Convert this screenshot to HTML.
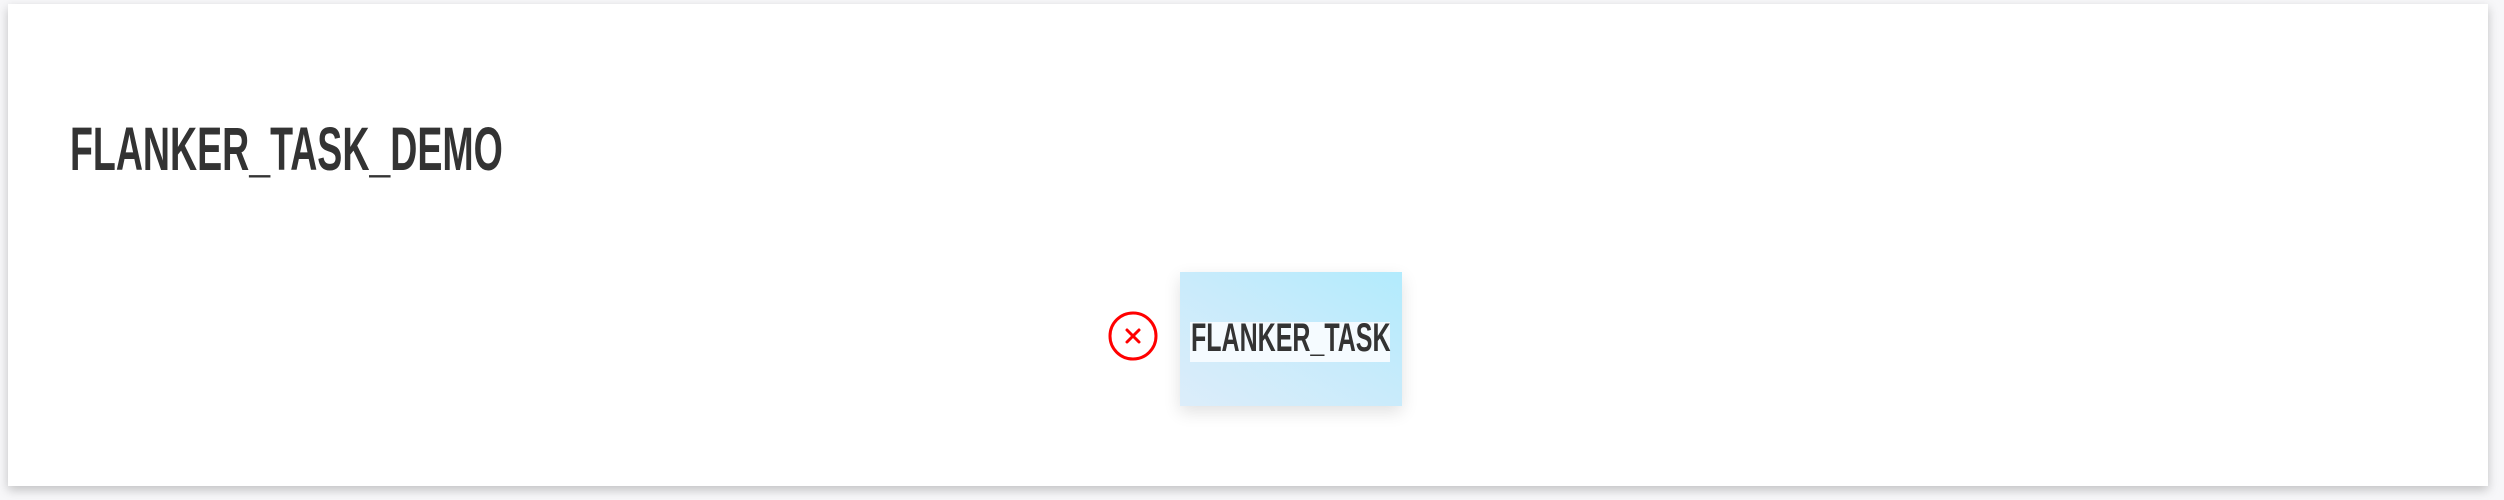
<!DOCTYPE html>
<html><head><style>
html,body{margin:0;padding:0;width:2504px;height:500px;background:#f7f7f9;overflow:hidden}
.card{position:absolute;left:8px;top:4px;width:2480px;height:482px;background:#fff;box-shadow:0 4px 10px rgba(0,0,0,.22)}
.t{position:absolute;font-family:"Liberation Sans",sans-serif;font-weight:bold;color:#333;white-space:nowrap;transform-origin:0 0}
.tile{position:absolute;left:1180px;top:272px;width:222px;height:134px;background:linear-gradient(30deg,#dcedfa 0%,#c9ebfb 50%,#b2ebfd 100%);box-shadow:0 6px 16px rgba(0,0,0,.12)}
.lab{position:absolute;left:1190px;top:322px;width:200px;height:40px;background:#f5fbff}
</style></head><body>
<div class="card"></div>
<div class="t" style="left:70px;top:116px;font-size:61px;line-height:66px;transform:scaleX(.615)">FLANKER_TASK_DEMO</div>
<svg style="position:absolute;left:1107px;top:310px" width="52" height="52" viewBox="0 0 52 52">
<circle cx="26" cy="26" r="23" fill="none" stroke="#f00" stroke-width="3"/>
<path d="M20 20L32 32M32 20L20 32" stroke="#f00" stroke-width="3" stroke-linecap="round"/>
</svg>
<div class="tile"></div>
<div class="lab"></div>
<div class="t" style="left:1191px;top:316px;font-size:40px;line-height:44px;transform:scaleX(.625)">FLANKER_TASK</div>
</body></html>
